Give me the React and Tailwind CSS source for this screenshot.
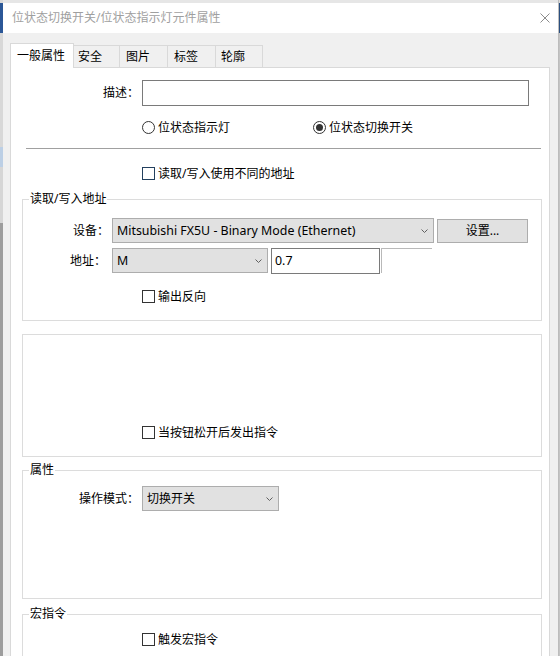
function Chevron() {
  return (
    <svg width="7" height="4" viewBox="0 0 7 4" className="shrink-0">
      <path d="M0.5 0.5L3.5 3.5L6.5 0.5" fill="none" stroke="#606060" strokeWidth="1" />
    </svg>
  );
}

function Select({ value, className, textClass = "" }) {
  return (
    <div className={`flex h-[25px] items-center border border-[#adadad] bg-[#e1e1e1] pl-[4px] pr-[5px] ${className}`}>
      <span className={`flex-1 truncate ${textClass}`}>{value}</span>
      <Chevron />
    </div>
  );
}

function Check({ label, className = "", boxColor = "border-[#333333]" }) {
  return (
    <div className={`flex h-[13px] items-center ${className}`}>
      <span className={`h-[13px] w-[13px] shrink-0 border bg-white ${boxColor}`} />
      <span className="ml-[3px] whitespace-nowrap">{label}</span>
    </div>
  );
}

function Radio({ label, checked, className = "" }) {
  return (
    <div className={`flex h-[13px] items-center ${className}`}>
      <span className="flex h-[13px] w-[13px] shrink-0 items-center justify-center rounded-full border border-[#333333] bg-white">
        {checked && <span className="h-[7px] w-[7px] rounded-full bg-[#333333]" />}
      </span>
      <span className="ml-[3px] whitespace-nowrap">{label}</span>
    </div>
  );
}

function Group({ title, className = "", children }) {
  return (
    <div className={`relative ml-[11px] w-[520px] border border-[#dcdcdc] ${className}`}>
      {title && (
        <span className="absolute left-[6px] top-[-9px] bg-white px-[1px] leading-[16px]">{title}</span>
      )}
      {children}
    </div>
  );
}

const tabs = [
  { name: "安全", w: "w-[46px]", pl: "pl-[4px]" },
  { name: "图片", w: "w-[48px]", pl: "pl-[6px]" },
  { name: "标签", w: "w-[48px]", pl: "pl-[6px]" },
  { name: "轮廓", w: "w-[47px]", pl: "pl-[5px]" },
];

export default function App() {
  return (
    <div className="flex h-[656px] w-[560px] overflow-hidden bg-[#f0f0f0] text-[12px] leading-[16px] text-black [font-family:'Noto_Sans','Noto_Sans_CJK_SC',sans-serif]">
      {/* what is behind the dialog, left */}
      <div className="flex w-[3px] shrink-0 flex-col">
        <div className="h-[3px] shrink-0 bg-[#d9d9d9]" />
        <div className="h-[30px] shrink-0 bg-[#2b5797]" />
        <div className="h-[114px] shrink-0 bg-[#d8d8d8]" />
        <div className="h-[20px] shrink-0 bg-[#bccfe5]" />
        <div className="h-[56px] shrink-0 bg-[#d6d6d6]" />
        <div className="flex-1 bg-[#9d9d9d]" />
      </div>

      <div className="flex w-[556px] shrink-0 flex-col border-r border-[#bcbcbc]">
        <div className="h-[3px] shrink-0 bg-[#e6e6e6]" />
        <div className="flex h-[30px] shrink-0 items-center bg-white pl-[9px] pr-[8px]">
          <span className="text-[#9f9f9f]">位状态切换开关/位状态指示灯元件属性</span>
          <svg className="ml-auto" width="10" height="10" viewBox="0 0 10 10">
            <path d="M0.5 0.5L9.5 9.5M9.5 0.5L0.5 9.5" stroke="#8c8c8c" strokeWidth="1" />
          </svg>
        </div>

        <div className="flex min-h-0 flex-1 flex-col pl-[7px] pr-[8px] pt-[10px]">
          <div className="flex h-[24px] shrink-0 items-end">
            <div className="relative z-10 -mb-px flex h-[25px] w-[64px] items-center border border-b-0 border-[#d9d9d9] bg-white pl-[6px]">
              一般属性
            </div>
            {tabs.map((t) => (
              <div
                key={t.name}
                className={`flex h-[22px] items-center border-r border-t border-[#d9d9d9] bg-[#f0f0f0] ${t.w} ${t.pl}`}
              >
                {t.name}
              </div>
            ))}
          </div>

          <div className="flex-1 shrink-0 border border-[#d9d9d9] bg-white">
            <div className="mt-[12px] flex h-[26px] items-center">
              <span className="w-[131px] pr-[3px] text-right">描述：</span>
              <div className="h-[26px] w-[387px] border border-[#7a7a7a] bg-white" />
            </div>

            <div className="ml-[131px] mt-[15px] flex">
              <Radio label="位状态指示灯" className="w-[171px]" />
              <Radio label="位状态切换开关" checked />
            </div>

            <div className="ml-[15px] mt-[14px] h-px w-[515px] bg-[#a0a0a0]" />

            <Check label="读取/写入使用不同的地址" className="ml-[131px] mt-[18px]" boxColor="border-[#23405e]" />

            <Group title="读取/写入地址" className="mt-[19px] h-[122px]">
              <div className="mt-[18px] flex h-[25px] items-center">
                <span className="w-[89px] pr-[3px] text-right">设备：</span>
                <Select
                  value="Mitsubishi FX5U - Binary Mode (Ethernet)"
                  className="w-[322px]"
                  textClass="text-[12.4px]"
                />
                <button className="ml-[3px] h-[24px] w-[91px] self-end border border-[#adadad] bg-[#e1e1e1] text-center">
                  设置...
                </button>
              </div>
              <div className="mt-[5px] flex h-[26px] items-start">
                <span className="flex h-[25px] w-[89px] items-center justify-end pr-[6px]">地址：</span>
                <Select value="M" className="w-[156px]" textClass="text-[12.4px]" />
                <div className="ml-[3px] flex h-[26px] w-[109px] items-center border border-[#7a7a7a] bg-white pl-[3px] text-[12.4px]">
                  0.7
                </div>
                <div className="ml-px h-[25px] w-[51px] border-l border-t border-[#b9b9b9]" />
              </div>
              <Check label="输出反向" className="ml-[119px] mt-[16px]" />
            </Group>

            <Group className="mt-[13px] h-[123px]">
              <Check label="当按钮松开后发出指令" className="ml-[119px] mt-[91px]" />
            </Group>

            <Group title="属性" className="mt-[13px] h-[129px]">
              <div className="mt-[15px] flex h-[25px] items-center">
                <span className="w-[119px] pr-[3px] text-right">操作模式：</span>
                <Select value="切换开关" className="w-[137px]" />
              </div>
            </Group>

            <Group title="宏指令" className="mt-[15px] h-[60px]">
              <Check label="触发宏指令" className="ml-[119px] mt-[18px]" />
            </Group>
          </div>
        </div>
      </div>

      {/* what is behind the dialog, right */}
      <div className="flex w-px shrink-0 flex-col">
        <div className="h-[3px] shrink-0 bg-[#d9d9d9]" />
        <div className="h-[30px] shrink-0 bg-[#2b4f7f]" />
        <div className="flex-1 bg-[#c4c4c4]" />
      </div>
    </div>
  );
}
